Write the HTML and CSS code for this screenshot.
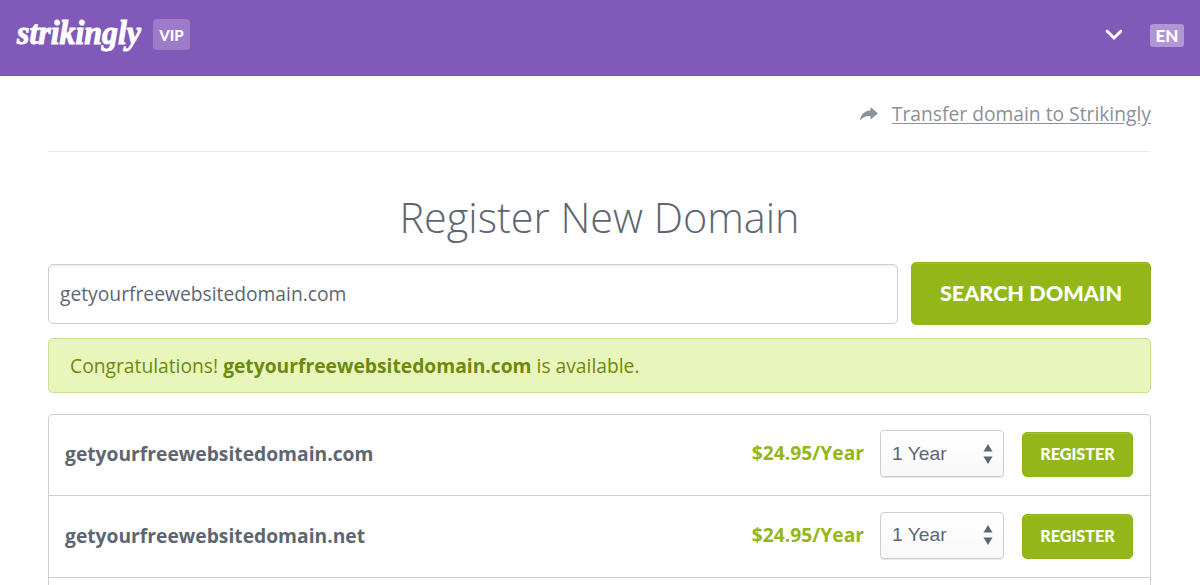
FILE: index.html
```html
<!DOCTYPE html>
<html lang="en">
    <head>
        <meta charset="UTF-8" />
        <meta name="viewport" content="width=device-width, initial-scale=1.0" />
        <title>Register New Domain</title>
        <link rel="stylesheet" href="styles.css">
    </head>
    <body>
        <header class="header">
            <svg class="logo" width="128" height="50" viewBox="0 0 128 50">
                <text x="1" y="32" textLength="124" lengthAdjust="spacingAndGlyphs">strikingly</text>
            </svg>
            <span class="vip">VIP</span>
            <svg class="chevron" width="18" height="12" viewBox="0 0 18 12">
                <path d="M2.2 2.2 9 9l6.8-6.8" />
            </svg>
            <span class="lang">EN</span>
        </header>

        <main class="container">
            <div class="transfer">
                <svg class="share" width="18" height="14" viewBox="0 0 18 14">
                    <path d="M0 13.5C1 7.5 4.500 4 10.500 3.600V0L18 6.500 10.500 12.500V9C6 8.800 3 10 0 13.500Z" />
                </svg>
                <a href="#">Transfer domain to Strikingly</a>
            </div>

            <h1>Register New Domain</h1>

            <div class="search">
                <input type="text" class="domain-input" value="getyourfreewebsitedomain.com" />
                <button class="search-button">SEARCH DOMAIN</button>
            </div>

            <div class="message">Congratulations! <b>getyourfreewebsitedomain.com</b> is available.</div>

            <div class="results">
                <div class="row">
                    <span class="name">getyourfreewebsitedomain.com</span>
                    <span class="price">$24.95/Year</span>
                    <div class="select">
                        <span>1 Year</span>
                        <svg width="10" height="20" viewBox="0 0 10 20"><path d="M5 0 9.500 7.500H.5ZM5 20 .5 12.500H9.500Z" /></svg>
                    </div>
                    <button class="register">REGISTER</button>
                </div>
                <div class="row">
                    <span class="name">getyourfreewebsitedomain.net</span>
                    <span class="price">$24.95/Year</span>
                    <div class="select">
                        <span>1 Year</span>
                        <svg width="10" height="20" viewBox="0 0 10 20"><path d="M5 0 9.500 7.500H.5ZM5 20 .5 12.500H9.500Z" /></svg>
                    </div>
                    <button class="register">REGISTER</button>
                </div>
            </div>
        </main>
    </body>
</html>
```
FILE: styles.css
```css
* {
    box-sizing: border-box;
}
body {
    margin: 0;
    background: #fff;
    color: #5e6672;
    font-family: 'Open Sans', sans-serif;
    font-size: 19.25px;
}
button {
    padding: 0 0 2px;
    border: 1px solid #8fb318;
    border-radius: 5px;
    background-color: #93b719;
    box-shadow: inset 0 1px 0 #a3c238;
    color: #fff;
    font-family: Lato, sans-serif;
    font-weight: 900;
    cursor: pointer;
}

.header {
    display: flex;
    align-items: flex-start;
    height: 76px;
    padding: 12px 16px 0;
    border-bottom: 1px solid #774cb2;
    background: #8159b9;
    color: #fff;
    font-family: Lato, sans-serif;
    font-weight: 900;
}
.logo {
    overflow: visible;
}
.logo text {
    fill: #fff;
    stroke: #fff;
    stroke-width: 1px;
    font: italic bold 34px 'Liberation Serif', serif;
}
.vip {
    width: 37px;
    height: 31px;
    margin: 7px 0 0 9px;
    border-radius: 4px;
    background: #9c7bc9;
    font-size: 15px;
    line-height: 32px;
    text-align: center;
}
.chevron {
    margin: 17px 27px 0 auto;
    fill: none;
    stroke: #fff;
    stroke-width: 3px;
    stroke-linecap: round;
}
.lang {
    width: 34px;
    height: 23px;
    margin-top: 12px;
    border-radius: 3px;
    background: #b196d6;
    font-size: 17px;
    line-height: 23px;
    text-align: center;
}

.container {
    width: 1103px;
    margin-left: 48px;
}
.transfer {
    display: flex;
    align-items: center;
    justify-content: flex-end;
    height: 76px;
    border-bottom: 1px solid #e8e9eb;
}
.transfer a {
    color: #8b9099;
    text-underline-offset: 2px;
}
.share {
    margin-right: 14px;
    fill: #8b9099;
}
h1 {
    height: 110px;
    margin: 0;
    padding-top: 36px;
    font-size: 41.4px;
    font-weight: 300;
    line-height: 59px;
    text-align: center;
}

.search {
    display: flex;
    align-items: center;
    justify-content: space-between;
    height: 63px;
}
.domain-input {
    width: 850px;
    height: 60px;
    padding: 0 11px;
    border: 1px solid #cdced6;
    border-radius: 5px;
    box-shadow: inset 0 2px 2px #f3f3f5;
    color: #5e6672;
    font: 19.25px 'Open Sans', sans-serif;
}
.search-button {
    width: 240px;
    height: 63px;
    font-size: 21.6px;
}
.message {
    height: 55px;
    margin-top: 13px;
    padding-left: 21px;
    border: 1px solid #cbdf90;
    border-radius: 5px;
    background: #e8f6bc;
    color: #6b8a0c;
    line-height: 53px;
}

.results {
    margin-top: 21px;
    padding-bottom: 7px;
    border: 1px solid #cdced2;
    border-bottom: none;
    border-radius: 5px 5px 0 0;
}
.row {
    display: flex;
    align-items: center;
    height: 82px;
    padding: 0 17px 3px 16px;
    border-bottom: 1px solid #cdced2;
}
.row:first-child {
    height: 81px;
}
.name {
    flex: 1;
    font-weight: bold;
}
.price {
    padding-bottom: 2px;
    color: #93b719;
    font-weight: bold;
}
.select {
    display: flex;
    align-items: center;
    justify-content: space-between;
    width: 124px;
    height: 47px;
    margin: 0 18px 0 16px;
    padding: 0 10px 0 11px;
    border: 1px solid #cdced4;
    border-radius: 4px;
    background: linear-gradient(#fff, #f8f8f8);
    box-shadow: 0 1px 1px #e6e6e8;
    font: 19.25px 'Liberation Sans', sans-serif;
}
.select svg {
    fill: #5e6672;
}
.register {
    width: 111px;
    height: 45px;
    margin-top: 2px;
    font-size: 16.2px;
}
```
